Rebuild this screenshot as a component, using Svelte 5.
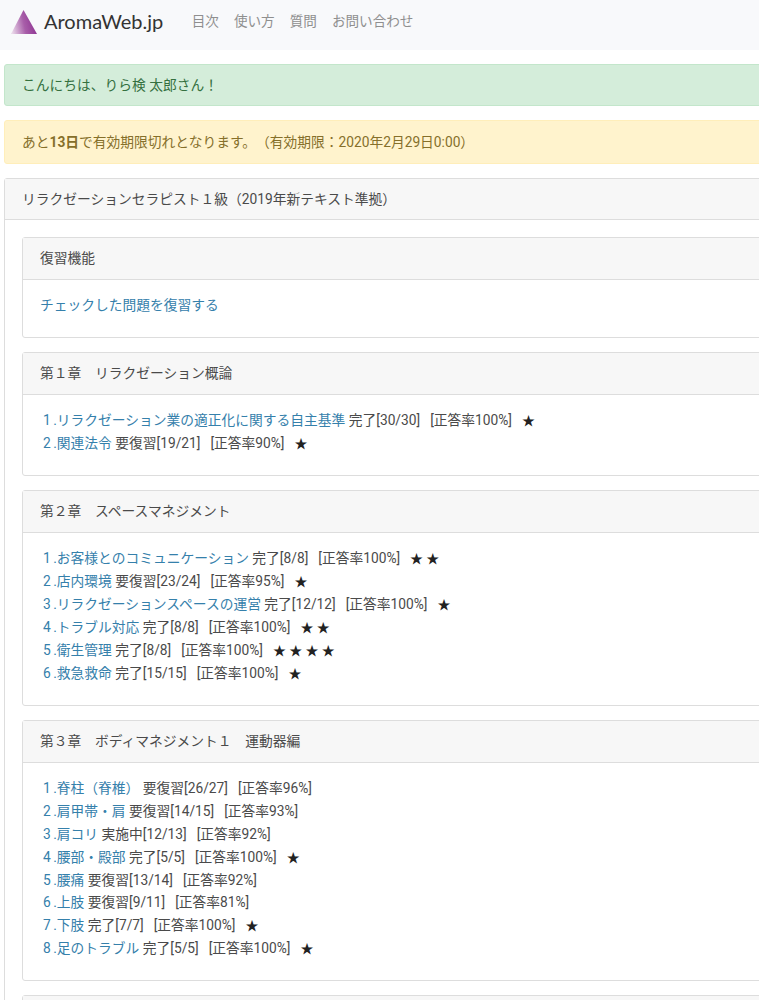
<script>
  const chapters = [
    {
      title: "第１章　リラクゼーション概論",
      items: [
        ["リラクゼーション業の適正化に関する自主基準", "完了[30/30]", "正答率100%", 1],
        ["関連法令", "要復習[19/21]", "正答率90%", 1],
      ],
    },
    {
      title: "第２章　スペースマネジメント",
      items: [
        ["お客様とのコミュニケーション", "完了[8/8]", "正答率100%", 2],
        ["店内環境", "要復習[23/24]", "正答率95%", 1],
        ["リラクゼーションスペースの運営", "完了[12/12]", "正答率100%", 1],
        ["トラブル対応", "完了[8/8]", "正答率100%", 2],
        ["衛生管理", "完了[8/8]", "正答率100%", 4],
        ["救急救命", "完了[15/15]", "正答率100%", 1],
      ],
    },
    {
      title: "第３章　ボディマネジメント１　運動器編",
      items: [
        ["脊柱（脊椎）", "要復習[26/27]", "正答率96%", 0],
        ["肩甲帯・肩", "要復習[14/15]", "正答率93%", 0],
        ["肩コリ", "実施中[12/13]", "正答率92%", 0],
        ["腰部・殿部", "完了[5/5]", "正答率100%", 1],
        ["腰痛", "要復習[13/14]", "正答率92%", 0],
        ["上肢", "要復習[9/11]", "正答率81%", 0],
        ["下肢", "完了[7/7]", "正答率100%", 1],
        ["足のトラブル", "完了[5/5]", "正答率100%", 1],
      ],
    },
  ];

  const navItems = ["目次", "使い方", "質問", "お問い合わせ"];
</script>

<nav class="navbar">
  <a class="brand" href="#top">
    <svg width="26" height="24" viewBox="0 0 26 24">
      <defs>
        <linearGradient id="tri" x1="0" y1="0.7" x2="1" y2="0.5">
          <stop offset="0" stop-color="#ead9ea" />
          <stop offset="0.5" stop-color="#a85ea9" />
          <stop offset="1" stop-color="#8c3190" />
        </linearGradient>
      </defs>
      <polygon points="12.5,0 26,24 0,24" fill="url(#tri)" />
    </svg>
    <span>AromaWeb.jp</span>
  </a>
  <ul class="nav">
    {#each navItems as item}
      <li><a href="#top">{item}</a></li>
    {/each}
  </ul>
</nav>

<main class="page">
  <div class="alert success">こんにちは、りら検 太郎さん！</div>
  <div class="alert warning">あと<b>13日</b>で有効期限切れとなります。（有効期限：2020年2月29日0:00）</div>

  <section class="card outer">
    <div class="card-header">リラクゼーションセラピスト１級（2019年新テキスト準拠）</div>
    <div class="outer-body">
      <section class="card">
        <div class="card-header">復習機能</div>
        <div class="card-body"><a href="#top">チェックした問題を復習する</a></div>
      </section>

      {#each chapters as chapter}
        <section class="card">
          <div class="card-header">{chapter.title}</div>
          <div class="card-body">
            {#each chapter.items as [name, status, rate, stars], i}
              <div class="row">
                <a href="#top"><span class="num">{i + 1}</span>.{name}</a>
                {status}<span class="rate">[{rate}]</span>{#if stars}<span class="stars">{Array(stars).fill("★").join(" ")}</span>{/if}
              </div>
            {/each}
          </div>
        </section>
      {/each}

      <section class="card"><div class="card-header"></div></section>
    </div>
  </section>
</main>

<style>
  :global(body) {
    overflow: hidden;
    background: #fff;
    color: #4a4a4a;
    font-family: "Roboto", "Noto Sans CJK JP", sans-serif;
    font-size: 13.75px;
    line-height: 23px;
    text-spacing-trim: space-all;
  }

  a {
    color: #3580ab;
    text-decoration: none;
  }

  .navbar {
    display: flex;
    align-items: center;
    height: 50px;
    padding: 0 11px 7px;
    box-sizing: border-box;
    background: #f8f9fb;
  }

  .brand {
    display: flex;
    align-items: center;
    gap: 7px;
    margin-right: 28.5px;
    color: #333;
    font-family: "Lato", sans-serif;
    font-size: 20px;
  }

  .nav {
    display: flex;
    gap: 15px;
    margin: 0;
    padding: 0;
    list-style: none;
    font-size: 13.6px;
  }

  .nav a {
    color: #8f8f8f;
  }

  .page {
    width: 800px;
    padding: 14px 4px 0;
    box-sizing: border-box;
  }

  .alert {
    margin-bottom: 14px;
    padding: 8.5px 17px;
    border: 1px solid transparent;
    border-radius: 3px;
  }

  .success {
    background: #d4edda;
    border-color: #c3e6cb;
    color: #35703f;
  }

  .warning {
    padding: 9.5px 17px;
    background: #fff3cd;
    border-color: #ffeeba;
    color: #856f2a;
  }

  .warning b {
    font-weight: 700;
  }

  .card {
    margin-bottom: 14px;
    background: #fff;
    border: 1px solid #ddd;
    border-radius: 3px;
  }

  .card-header {
    height: 41px;
    padding: 0 17px;
    box-sizing: border-box;
    background: #f7f7f7;
    border-bottom: 1px solid #ddd;
    line-height: 40px;
  }

  .outer-body {
    padding: 17px 17px 0;
  }

  .outer-body .card-header {
    height: 42px;
    line-height: 41px;
  }

  .card-body {
    padding: 14px 17px 20.3px;
  }

  .row {
    height: 22.9px;
    white-space: nowrap;
  }

  .num {
    margin-left: 3px;
    margin-right: 1.5px;
    letter-spacing: 1px;
  }

  .rate {
    margin-left: 10px;
  }

  .stars {
    margin-left: 10px;
    color: #222;
    font-size: 13px;
    line-height: 1;
  }
</style>
